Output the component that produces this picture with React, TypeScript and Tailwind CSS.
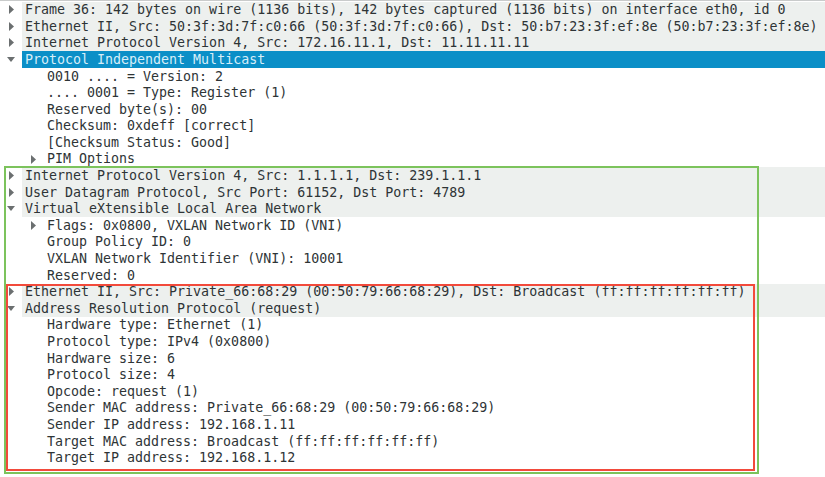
import React from "react";

type Row = {
  depth: number;
  text: string;
  arrow?: "right" | "down";
  selected?: boolean;
};

const rows: Row[] = [
  { depth: 0, arrow: "right", text: "Frame 36: 142 bytes on wire (1136 bits), 142 bytes captured (1136 bits) on interface eth0, id 0" },
  { depth: 0, arrow: "right", text: "Ethernet II, Src: 50:3f:3d:7f:c0:66 (50:3f:3d:7f:c0:66), Dst: 50:b7:23:3f:ef:8e (50:b7:23:3f:ef:8e)" },
  { depth: 0, arrow: "right", text: "Internet Protocol Version 4, Src: 172.16.11.1, Dst: 11.11.11.11" },
  { depth: 0, arrow: "down", selected: true, text: "Protocol Independent Multicast" },
  { depth: 1, text: "0010 .... = Version: 2" },
  { depth: 1, text: ".... 0001 = Type: Register (1)" },
  { depth: 1, text: "Reserved byte(s): 00" },
  { depth: 1, text: "Checksum: 0xdeff [correct]" },
  { depth: 1, text: "[Checksum Status: Good]" },
  { depth: 1, arrow: "right", text: "PIM Options" },
  { depth: 0, arrow: "right", text: "Internet Protocol Version 4, Src: 1.1.1.1, Dst: 239.1.1.1" },
  { depth: 0, arrow: "right", text: "User Datagram Protocol, Src Port: 61152, Dst Port: 4789" },
  { depth: 0, arrow: "down", text: "Virtual eXtensible Local Area Network" },
  { depth: 1, arrow: "right", text: "Flags: 0x0800, VXLAN Network ID (VNI)" },
  { depth: 1, text: "Group Policy ID: 0" },
  { depth: 1, text: "VXLAN Network Identifier (VNI): 10001" },
  { depth: 1, text: "Reserved: 0" },
  { depth: 0, arrow: "right", text: "Ethernet II, Src: Private_66:68:29 (00:50:79:66:68:29), Dst: Broadcast (ff:ff:ff:ff:ff:ff)" },
  { depth: 0, arrow: "down", text: "Address Resolution Protocol (request)" },
  { depth: 1, text: "Hardware type: Ethernet (1)" },
  { depth: 1, text: "Protocol type: IPv4 (0x0800)" },
  { depth: 1, text: "Hardware size: 6" },
  { depth: 1, text: "Protocol size: 4" },
  { depth: 1, text: "Opcode: request (1)" },
  { depth: 1, text: "Sender MAC address: Private_66:68:29 (00:50:79:66:68:29)" },
  { depth: 1, text: "Sender IP address: 192.168.1.11" },
  { depth: 1, text: "Target MAC address: Broadcast (ff:ff:ff:ff:ff:ff)" },
  { depth: 1, text: "Target IP address: 192.168.1.12" },
];

const Arrow = ({ dir }: { dir: "right" | "down" }) => {
  const fill = "#6b6f70";
  return dir === "right" ? (
    <svg width="5" height="9" viewBox="0 0 5 9">
      <polygon points="0,0 5,4.5 0,9" fill={fill} />
    </svg>
  ) : (
    <svg width="8" height="5" viewBox="0 0 8 5">
      <polygon points="0,0 8,0 4,5" fill={fill} />
    </svg>
  );
};

const App = () => {
  return (
    <div className="relative w-[825px] h-[477px] bg-white overflow-hidden border-t border-[#c9cbcb] font-['DejaVu_Sans_Mono',monospace] text-[13.3px] text-[#2e3436]">
      <div className="flex flex-col pt-[0.5px]">
        {rows.map((r, i) => (
          <div key={i} className="flex h-[16.6px] items-center">
            <div
              className={
                r.depth === 0
                  ? "w-[22px] shrink-0 flex items-center justify-center"
                  : "w-[22px] shrink-0"
              }
            >
              {r.depth === 0 && r.arrow && <Arrow dir={r.arrow} />}
            </div>
            <div
              className={
                "flex-1 h-full flex items-center whitespace-pre leading-none " +
                (r.selected
                  ? "bg-[#0b8fc7] text-[#d6eef9]"
                  : r.depth === 0
                    ? "bg-[#edf0ee]"
                    : "bg-white")
              }
            >
              {r.depth === 1 ? (
                <div className="w-[25px] shrink-0 flex items-center justify-center pr-[3px]">
                  {r.arrow && <Arrow dir={r.arrow} />}
                </div>
              ) : (
                <div className="w-[3px] shrink-0" />
              )}
              <span>{r.text}</span>
            </div>
          </div>
        ))}
      </div>
      <div className="absolute left-[4px] top-[165px] w-[755px] h-[308px] border-2 border-[#7cc35c] pointer-events-none" />
      <div className="absolute left-[6px] top-[283px] w-[749px] h-[187px] border-2 border-[#f24a3b] pointer-events-none" />
    </div>
  );
};

export default App;
